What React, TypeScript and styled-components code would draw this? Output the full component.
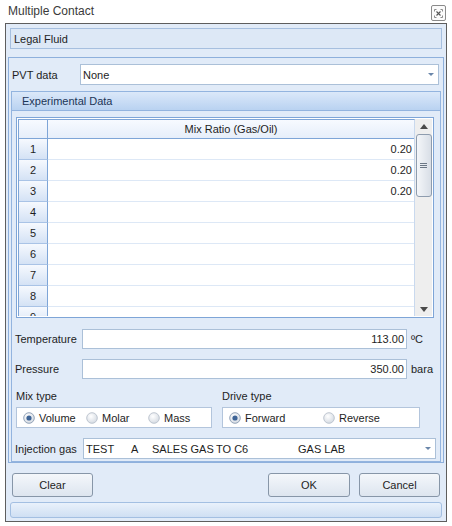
import React from 'react'
import styled, { createGlobalStyle } from 'styled-components'

const GlobalStyle = createGlobalStyle`
  html, body {
    margin: 0;
    padding: 0;
    background: #ffffff;
  }
  body {
    font-family: "Liberation Sans", Arial, sans-serif;
    font-size: 11px;
    color: #1e1e1e;
  }
`

const rows = ['0.20', '0.20', '0.20', '', '', '', '', '', '']

export default function App() {
  return (
    <>
      <GlobalStyle />
      <TitleBar>
        <Title>Multiple Contact</Title>
        <CloseButton>
          <svg width="9" height="9" viewBox="0 0 9 9">
            <path d="M0.5 2.5v-2h2M6.5 0.5h2v2M8.5 6.5v2h-2M2.5 8.5h-2v-2" stroke="#8a8a8a" strokeWidth="1" fill="none" />
            <path d="M2.5 2.5l4 4M6.5 2.5l-4 4" stroke="#555" strokeWidth="1.1" />
          </svg>
        </CloseButton>
      </TitleBar>

      <Frame>
        <LegalBox>Legal Fluid</LegalBox>

        <Panel>
          <FieldRow>
            <Label $width={68}>PVT data</Label>
            <Combo $width={359}>
              <span>None</span>
              <ComboArrow />
            </Combo>
          </FieldRow>

          <Group>
            <GroupHeader>Experimental Data</GroupHeader>
            <GroupBody>
              <Grid>
                <Table>
                  <HeaderRow>
                    <CornerCell />
                    <HeaderCell>Mix Ratio (Gas/Oil)</HeaderCell>
                  </HeaderRow>
                  {rows.map((v, i) => (
                    <DataRow key={i}>
                      <RowHead>{i + 1}</RowHead>
                      <ValueCell>{v}</ValueCell>
                    </DataRow>
                  ))}
                </Table>
                <ScrollBar>
                  <ArrowBox>
                    <svg width="8" height="5" viewBox="0 0 8 5"><path d="M0 5L4 0L8 5Z" fill="#4a4a4a" /></svg>
                  </ArrowBox>
                  <Thumb>
                    <Grip />
                  </Thumb>
                  <ScrollSpacer />
                  <ArrowBox>
                    <svg width="8" height="5" viewBox="0 0 8 5"><path d="M0 0L8 0L4 5Z" fill="#4a4a4a" /></svg>
                  </ArrowBox>
                </ScrollBar>
              </Grid>

              <FieldRow $top={11} $height={20}>
                <Label $width={67}>Temperature</Label>
                <NumberInput $width={325}>113.00</NumberInput>
                <Unit>ºC</Unit>
              </FieldRow>
              <FieldRow $top={10} $height={20}>
                <Label $width={67}>Pressure</Label>
                <NumberInput $width={325}>350.00</NumberInput>
                <Unit>bara</Unit>
              </FieldRow>

              <OptionsRow>
                <OptionColumn $width={196}>
                  <SmallLabel>Mix type</SmallLabel>
                  <RadioBox>
                    <Radio label="Volume" checked width={63} />
                    <Radio label="Molar" width={62} />
                    <Radio label="Mass" />
                  </RadioBox>
                </OptionColumn>
                <OptionColumn $width={198}>
                  <SmallLabel>Drive type</SmallLabel>
                  <RadioBox>
                    <Radio label="Forward" checked width={94} />
                    <Radio label="Reverse" />
                  </RadioBox>
                </OptionColumn>
              </OptionsRow>

              <FieldRow $top={10}>
                <Label $width={68}>Injection gas</Label>
                <Combo $width={353}>
                  <ComboCol $width={45}>TEST</ComboCol>
                  <ComboCol $width={21}>A</ComboCol>
                  <ComboCol $width={64}>SALES GAS</ComboCol>
                  <ComboCol $width={82}>TO C6</ComboCol>
                  <ComboCol>GAS LAB</ComboCol>
                  <ComboArrow />
                </Combo>
              </FieldRow>
            </GroupBody>
          </Group>
        </Panel>

        <ButtonRow>
          <Button>Clear</Button>
          <ButtonSpacer />
          <Button $width={82}>OK</Button>
          <Button>Cancel</Button>
        </ButtonRow>

        <StatusBar />
      </Frame>
    </>
  )
}

function Radio({ label, checked, width }: { label: string; checked?: boolean; width?: number }) {
  return (
    <RadioItem $width={width}>
      <svg width="12" height="12" viewBox="0 0 12 12">
        <defs>
          <radialGradient id={`rg-${label}`} cx="40%" cy="35%" r="70%">
            <stop offset="0" stopColor="#ffffff" />
            <stop offset="1" stopColor="#d3d9e1" />
          </radialGradient>
        </defs>
        <circle cx="6" cy="6" r="5.3" fill={`url(#rg-${label})`} stroke={checked ? '#8a9cb2' : '#b9c1cc'} strokeWidth="0.9" />
        {checked && <circle cx="6" cy="6" r="2.6" fill="#3e6496" />}
      </svg>
      <span>{label}</span>
    </RadioItem>
  )
}

const TitleBar = styled.div`
  height: 23px;
  display: flex;
  align-items: flex-start;
  justify-content: space-between;
`

const Title = styled.div`
  font-size: 12px;
  color: #3a3a3a;
  padding: 4px 0 0 8px;
`

const CloseButton = styled.div`
  width: 13px;
  height: 14px;
  margin: 5px 6px 0 0;
  border: 1px solid #8a8a8a;
  border-radius: 2px;
  background: #fbfbfb;
  display: flex;
  align-items: center;
  justify-content: center;
`

const Frame = styled.div`
  box-sizing: border-box;
  margin-left: 5px;
  width: 442px;
  height: 499px;
  border: 1px solid #5e5e5e;
  background: #e1ebf8;
  padding: 4px 4px 0 4px;
  display: flex;
  flex-direction: column;
`

const LegalBox = styled.div`
  box-sizing: border-box;
  height: 21px;
  border: 1px solid #a6bfdf;
  background: #dde8f6;
  padding-left: 3px;
  display: flex;
  align-items: center;
`

const Panel = styled.div`
  margin: 8px -2px 0 -2px;
  border: 1px solid #8eb0dc;
  padding-top: 6px;
  display: flex;
  flex-direction: column;
`

const FieldRow = styled.div<{ $top?: number; $height?: number }>`
  display: flex;
  align-items: center;
  height: ${p => p.$height ?? 21}px;
  margin-top: ${p => p.$top ?? 0}px;
  padding-left: 3px;
`

const Label = styled.div<{ $width: number }>`
  width: ${p => p.$width}px;
  flex-shrink: 0;
`

const Combo = styled.div<{ $width: number }>`
  box-sizing: border-box;
  width: ${p => p.$width}px;
  height: 100%;
  background: #ffffff;
  border: 1px solid #abc0d8;
  display: flex;
  align-items: center;
  padding-left: 2px;
`

const ComboCol = styled.span<{ $width?: number }>`
  width: ${p => (p.$width ? `${p.$width}px` : 'auto')};
  flex-shrink: 0;
  white-space: nowrap;
`

const ComboArrow = styled.span`
  margin-left: auto;
  margin-right: 4px;
  width: 0;
  height: 0;
  border-left: 3px solid transparent;
  border-right: 3px solid transparent;
  border-top: 3px solid #6a86aa;
`

const Group = styled.div`
  margin: 6px 2px 0 2px;
  display: flex;
  flex-direction: column;
`

const GroupHeader = styled.div`
  box-sizing: border-box;
  height: 20px;
  border: 1px solid #93b4df;
  background: linear-gradient(#dbe8f9, #b9d2f1);
  color: #1c3557;
  padding-left: 10px;
  display: flex;
  align-items: center;
`

const GroupBody = styled.div`
  border: 1px solid #93b4df;
  border-top: none;
  padding: 6px 0 2px 0;
  display: flex;
  flex-direction: column;
`

const Grid = styled.div`
  box-sizing: border-box;
  margin-left: 4px;
  width: 418px;
  height: 201px;
  border: 1px solid #7ea5d7;
  padding: 1px;
  background: #ffffff;
  display: flex;
`

const Table = styled.div`
  flex: 1;
  border-top: 1px solid #7ea5d7;
  border-left: 1px solid #7ea5d7;
  border-right: 1px solid #c9d9ee;
  overflow: hidden;
  display: flex;
  flex-direction: column;
`

const HeaderRow = styled.div`
  display: flex;
  height: 19px;
  flex-shrink: 0;
  border-bottom: 1px solid #7ea5d7;
  box-sizing: border-box;
`

const CornerCell = styled.div`
  width: 28px;
  border-right: 1px solid #7ea5d7;
  background: linear-gradient(#f7faff, #e6eefa);
`

const HeaderCell = styled.div`
  flex: 1;
  background: linear-gradient(#f7faff, #e6eefa);
  display: flex;
  align-items: center;
  justify-content: center;
`

const DataRow = styled.div`
  display: flex;
  height: 21px;
  flex-shrink: 0;
  box-sizing: border-box;
`

const RowHead = styled.div`
  width: 28px;
  border-right: 1px solid #7ea5d7;
  border-bottom: 1px solid #a9c3e6;
  background: linear-gradient(#f6f9fe, #d4e2f5);
  display: flex;
  align-items: center;
  justify-content: center;
`

const ValueCell = styled.div`
  flex: 1;
  border-bottom: 1px solid #dde8f6;
  display: flex;
  align-items: center;
  justify-content: flex-end;
  padding-right: 2px;
`

const ScrollBar = styled.div`
  width: 17px;
  background: #eeeeee;
  display: flex;
  flex-direction: column;
  align-items: center;
`

const ArrowBox = styled.div`
  height: 14px;
  display: flex;
  align-items: center;
  justify-content: center;
`

const Thumb = styled.div`
  box-sizing: border-box;
  width: 16px;
  height: 63px;
  margin-top: 1px;
  border: 1px solid #8e9cae;
  border-radius: 3px;
  background: linear-gradient(90deg, #f4f6f9, #d8dee6);
  display: flex;
  align-items: center;
  justify-content: center;
`

const Grip = styled.div`
  width: 7px;
  height: 5px;
  border-top: 1px solid #6b7785;
  border-bottom: 1px solid #6b7785;
  box-sizing: border-box;
  position: relative;
  &::after {
    content: '';
    position: absolute;
    left: 0;
    right: 0;
    top: 1px;
    border-top: 1px solid #6b7785;
  }
`

const ScrollSpacer = styled.div`
  flex: 1;
`

const NumberInput = styled.div<{ $width: number }>`
  box-sizing: border-box;
  width: ${p => p.$width}px;
  height: 100%;
  background: #ffffff;
  border: 1px solid #abc0d8;
  display: flex;
  align-items: center;
  justify-content: flex-end;
  padding-right: 2px;
`

const Unit = styled.div`
  margin-left: 4px;
`

const OptionsRow = styled.div`
  display: flex;
  gap: 10px;
  margin-top: 11px;
  padding-left: 4px;
`

const OptionColumn = styled.div<{ $width: number }>`
  width: ${p => p.$width}px;
  display: flex;
  flex-direction: column;
  gap: 4px;
`

const SmallLabel = styled.div`
  height: 13px;
  line-height: 13px;
`

const RadioBox = styled.div`
  box-sizing: border-box;
  height: 21px;
  background: #ffffff;
  border: 1px solid #b3c5dc;
  display: flex;
  align-items: center;
  padding-left: 6px;
`

const RadioItem = styled.div<{ $width?: number }>`
  width: ${p => (p.$width ? `${p.$width}px` : 'auto')};
  display: flex;
  align-items: center;
  gap: 4px;
`

const ButtonRow = styled.div`
  display: flex;
  gap: 9px;
  margin-top: 10px;
  padding: 0 2px;
`

const ButtonSpacer = styled.div`
  flex: 1;
`

const Button = styled.div<{ $width?: number }>`
  box-sizing: border-box;
  width: ${p => p.$width ?? 81}px;
  height: 24px;
  border: 1px solid #8796a8;
  border-radius: 3px;
  background: linear-gradient(#f4f7fb, #dde5ef);
  display: flex;
  align-items: center;
  justify-content: center;
`

const StatusBar = styled.div`
  box-sizing: border-box;
  margin-top: 5px;
  height: 16px;
  border: 1px solid #a3bfe2;
  border-radius: 3px;
  background: linear-gradient(#e9f1fb, #cfdff3);
`
